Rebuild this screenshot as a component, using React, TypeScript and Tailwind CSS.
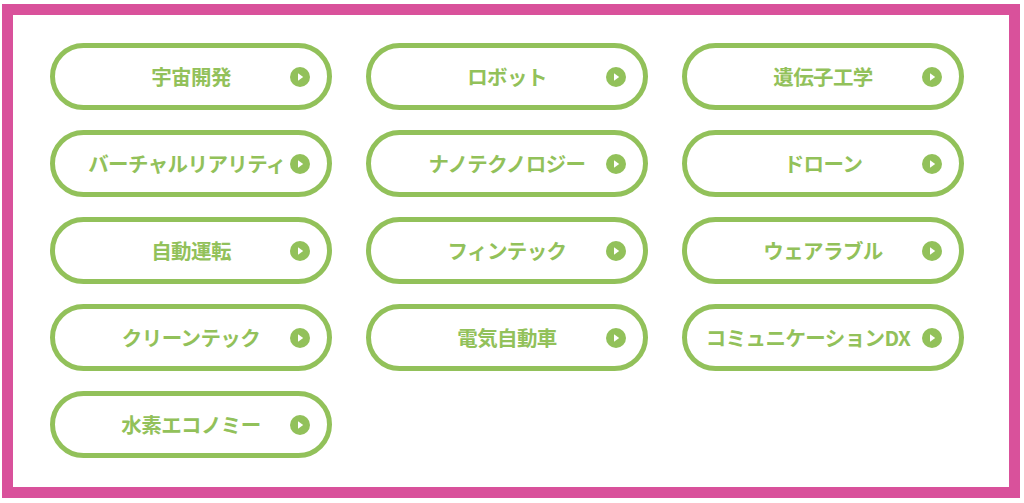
const topics: { label: string; shift?: string }[] = [
  { label: '宇宙開発' },
  { label: 'ロボット' },
  { label: '遺伝子工学' },
  { label: 'バーチャルリアリティ', shift: '-translate-x-[4px]' },
  { label: 'ナノテクノロジー' },
  { label: 'ドローン' },
  { label: '自動運転' },
  { label: 'フィンテック' },
  { label: 'ウェアラブル' },
  { label: 'クリーンテック' },
  { label: '電気自動車' },
  { label: 'コミュニケーションDX', shift: '-translate-x-[15px]' },
  { label: '水素エコノミー' },
];

function PlayIcon() {
  return (
    <svg width="20" height="20" viewBox="0 0 20 20" className="absolute right-[17px] top-1/2 -translate-y-1/2">
      <circle cx="10" cy="10" r="10" fill="#92c15a" />
      <path d="M8 6.2 L13.2 10 L8 13.8 Z" fill="#fff" />
    </svg>
  );
}

export default function App() {
  return (
    <div className="w-[1024px] h-[503px] bg-white pt-[4px] pl-[2px]">
      <div className="w-[1018px] h-[494px] border-[11px] border-[#d9519b] pt-[28px] pl-[37px]">
        <div className="grid grid-cols-[282px_282px_282px] gap-x-[34px] gap-y-[20px]">
          {topics.map((t) => (
            <a
              key={t.label}
              href="#"
              className="relative flex h-[67px] items-center justify-center rounded-full border-[5px] border-[#92c15a] bg-white"
            >
              <span
                className={`whitespace-nowrap text-[20.5px] font-bold leading-none tracking-[-0.6px] text-[#92c15a] ${t.shift ?? ''}`}
                style={{ fontFamily: '"Noto Sans CJK JP", "Noto Sans", sans-serif' }}
              >
                {t.label}
              </span>
              <PlayIcon />
            </a>
          ))}
        </div>
      </div>
    </div>
  );
}
